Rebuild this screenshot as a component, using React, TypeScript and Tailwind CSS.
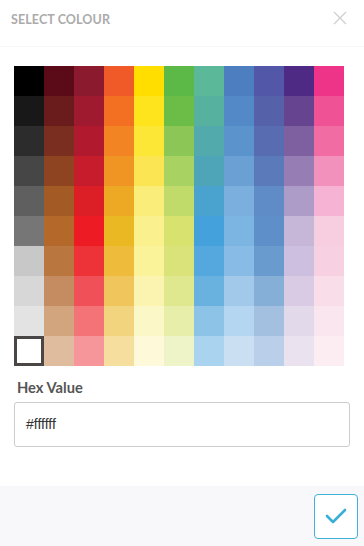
import React from "react";

const COLS: string[][] = [
  ["#000000", "#181818", "#2c2c2c", "#464646", "#5f5f5f", "#767676", "#c8c8c8", "#d7d7d7", "#e3e3e3", "#ffffff"],
  ["#5b0b18", "#6a1b1b", "#7a2e1f", "#8e4420", "#a35a24", "#b4692a", "#b9773f", "#c48c60", "#d2a57f", "#e0bc9f"],
  ["#8b1a2e", "#9f1a2e", "#b11a2e", "#c71c2b", "#dc1f26", "#ed1c24", "#ee3338", "#f05058", "#f47377", "#f6969b"],
  ["#f05a28", "#f36f22", "#f28423", "#f09524", "#eea924", "#eab823", "#eebc3a", "#f0c65c", "#f3d47e", "#f6df9e"],
  ["#ffde00", "#fde41c", "#fce737", "#fbe553", "#fbed7a", "#faf08d", "#faf39a", "#fbf4b1", "#fcf7c6", "#fdf9d9"],
  ["#5cb947", "#6bbd47", "#8cc656", "#a8d262", "#c1db6a", "#d8e26e", "#d9e37a", "#dfe78f", "#e7eeaa", "#eff3c8"],
  ["#5bb898", "#56b29f", "#52aaac", "#4fa5b8", "#4aa2cf", "#45a1dc", "#55a8de", "#69b2df", "#8dc3e6", "#aad3ef"],
  ["#4d7ebf", "#5289c6", "#5b93cd", "#6aa0d3", "#7bafdd", "#7cb4e2", "#88bbe5", "#a2c9ea", "#b5d6f0", "#cae0f2"],
  ["#5257a7", "#5561a8", "#586cb1", "#5b7ab9", "#5f8bc6", "#5e8fc9", "#6a9bcf", "#86afd8", "#a3c0e1", "#bacfe9"],
  ["#4f2a84", "#67448f", "#7e5f9f", "#967db4", "#ad9bc8", "#c6b6d8", "#cdbfdf", "#d9cbe3", "#e2d9ea", "#ebe2f0"],
  ["#ee3489", "#ef5295", "#f06ca3", "#f291bc", "#f6b3d3", "#f7cde0", "#f7d1e2", "#f9dde9", "#fae6ef", "#fcedf3"],
];

export default function App() {
  const rows = Array.from({ length: 10 }, (_, r) => COLS.map((c) => c[r]));
  return (
    <div className="w-[364px] h-[546px] bg-white flex flex-col overflow-hidden" style={{ fontFamily: "Lato, 'Open Sans', sans-serif" }}>
      <div className="h-[47px] flex items-start justify-between border-b border-[#f7f7f7] pl-[11px] pr-[17px]">
        <div className="mt-[11px] text-[12.5px] font-bold text-[#ababab] tracking-[0.1px]">SELECT COLOUR</div>
        <svg className="mt-[11px]" width="14" height="14" viewBox="0 0 14 14">
          <path d="M1 1 L13 13 M13 1 L1 13" stroke="#cfcfcf" strokeWidth="1.3" fill="none" />
        </svg>
      </div>
      <div className="px-[14px] pt-[19px]">
        <div className="grid grid-cols-[repeat(11,30px)]">
          {rows.flatMap((row, r) =>
            row.map((c, i) => {
              const selected = r === 9 && i === 0;
              return (
                <div
                  key={`${r}-${i}`}
                  className={selected ? "w-[30px] h-[30px] border-[3px] border-[#4a4646]" : "w-[30px] h-[30px]"}
                  style={{ backgroundColor: c }}
                />
              );
            })
          )}
        </div>
      </div>
      <div className="px-[14px] pt-[13px]">
        <div className="pl-[3px] text-[14.7px] font-bold text-[#555555] leading-[17px]">Hex Value</div>
        <div className="mt-[6px] h-[45px] border border-[#cccccc] rounded-[3px] flex items-center pl-[11px]">
          <span className="text-[14px] text-[#333333]" style={{ fontFamily: "'Liberation Sans', Arial, sans-serif" }}>#ffffff</span>
        </div>
      </div>
      <div className="flex-1" />
      <div className="h-[60px] bg-[#f8f8fa] flex items-center justify-end pr-[6px]">
        <div className="w-[44px] h-[45px] bg-white border border-[#3fb2d6] rounded-[4px] flex items-center justify-center">
          <svg width="22" height="16" viewBox="0 0 22 16">
            <path d="M2 8 L8 14 L20 2" stroke="#3aaed4" strokeWidth="2.6" fill="none" strokeLinecap="round" strokeLinejoin="round" />
          </svg>
        </div>
      </div>
    </div>
  );
}
